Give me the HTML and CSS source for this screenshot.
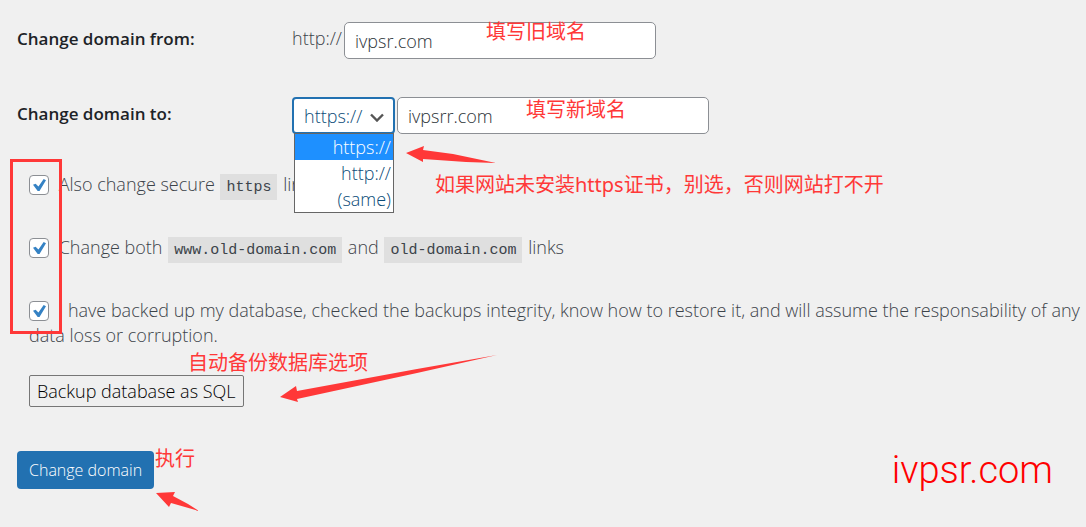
FILE: index.html
```
<!DOCTYPE html>
<html lang="en">
<head>
<meta charset="UTF-8">
<meta name="viewport" content="width=device-width, initial-scale=1.0">
<title>Change domain</title>
<link rel="stylesheet" href="styles.css">
</head>
<body>
<form class="domain-form">
  <div class="row">
    <label class="row-label" for="domain_from">Change domain from:</label>
    <div class="row-field">
      <span class="scheme">http://</span>
      <input type="text" class="domain-input" id="domain_from" value="ivpsr.com">
    </div>
    <span class="note note-old" lang="zh">填写旧域名</span>
  </div>

  <div class="row">
    <label class="row-label" for="domain_to">Change domain to:</label>
    <div class="row-field row-field-to">
      <div class="scheme-select">
        <select id="scheme" aria-label="Scheme">
          <option>https://</option>
          <option>http://</option>
          <option>(same)</option>
        </select>
        <svg class="chevron" viewBox="0 0 14 9" width="14" height="9"><path d="M1 1.5 L7 7.5 L13 1.5" fill="none" stroke="#555" stroke-width="2.4"/></svg>
        <ul class="scheme-menu">
          <li class="active">https://</li>
          <li>http://</li>
          <li>(same)</li>
        </ul>
      </div>
      <input type="text" class="domain-input" id="domain_to" value="ivpsrr.com">
    </div>
    <span class="note note-new" lang="zh">填写新域名</span>
    <svg class="arrow arrow-menu" viewBox="0 0 90 17" width="90" height="17"><path d="M0 7 L18 0 L17 4 L47 8 L90 17 L60 16 L17 13 L17 16 Z"/></svg>
    <span class="note note-https" lang="zh">如果网站未安装https证书，别选，否则网站打不开</span>
  </div>

  <div class="checks">
    <div class="mark-box"></div>
    <p class="check">
      <input type="checkbox" id="https_links" checked>
      <label for="https_links">Also change secure <code>https</code> links</label>
    </p>
    <p class="check">
      <input type="checkbox" id="both_links" checked>
      <label for="both_links">Change both <code>www.old-domain.com</code> and <code>old-domain.com</code> links</label>
    </p>
    <p class="check">
      <input type="checkbox" id="accept" checked>
      <label for="accept">I have backed up my database, checked the backups integrity, know how to restore it, and will assume the responsability of any data loss or corruption.</label>
    </p>
  </div>

  <div class="backup">
    <button type="button" class="backup-button">Backup database as SQL</button>
    <span class="note note-backup" lang="zh">自动备份数据库选项</span>
    <svg class="arrow arrow-backup" viewBox="0 0 217 47" width="217" height="47"><path d="M0 42 L16 31 L17 36 L137 14 L217 0 L137 18 L17 44 L18 47 Z"/></svg>
  </div>

  <div class="submit">
    <button type="submit" class="submit-button">Change domain</button>
    <span class="note note-run" lang="zh">执行</span>
    <svg class="arrow arrow-run" viewBox="0 0 43 19" width="43" height="19"><path d="M0 1 L19 0 L17 4 L32 12 L43 19 L15 11 L13 15 Z"/></svg>
  </div>
</form>
<div class="watermark">ivpsr.com</div>
</body>
</html>
```
FILE: styles.css
```
* {
  box-sizing: border-box;
}

body {
  margin: 0;
  background-color: #f0f0f0;
  color: #3c434a;
  font-family: "Open Sans", "Noto Sans CJK SC", sans-serif;
  font-size: 18px;
  font-weight: 300;
  line-height: 25px;
  position: relative;
}

input, select, button {
  font-family: inherit;
  font-size: inherit;
  font-weight: inherit;
}

.domain-form {
  padding: 22px 5px 22px 17px;
}

.row {
  display: grid;
  grid-template-columns: 275px 1fr;
  position: relative;
  margin-bottom: 38px;
}

.row-label {
  padding-top: 4px;
  color: #1d2327;
  font-size: 17px;
  font-weight: 600;
}

.row-field {
  display: flex;
}

.row-field-to {
  gap: 2px;
}

.scheme {
  width: 52px;
  padding-top: 4px;
}

.domain-input {
  width: 312px;
  height: 37px;
  padding: 0 10px;
  border: 1px solid #8c8f94;
  border-radius: 5px;
  background-color: #fff;
  color: #2c3338;
}

/* scheme drop-down, shown open */
.scheme-select {
  position: relative;
  width: 103px;
}

.scheme-select select {
  width: 100%;
  height: 37px;
  padding: 0 10px;
  border: 2px solid #2271b1;
  border-radius: 4px;
  background-color: #fff;
  color: #0a4b78;
  appearance: none;
}

.chevron {
  position: absolute;
  top: 16px;
  right: 11px;
}

.scheme-menu {
  position: absolute;
  z-index: 2;
  top: 36px;
  left: 2px;
  right: 1px;
  margin: 0;
  padding: 0;
  border: 1px solid #666;
  background-color: #fff;
  color: #0a4b78;
  list-style: none;
  line-height: 26px;
  text-align: right;
}

.scheme-menu li {
  padding-right: 2px;
}

.scheme-menu .active {
  background-color: #1e90ff;
  color: #fff;
}

/* check boxes */
.checks {
  position: relative;
  padding-left: 12px;
}

.check {
  margin: 0 0 38px;
}

.check input {
  appearance: none;
  position: relative;
  width: 20px;
  height: 20px;
  margin: 0 5px 0 0;
  border: 1px solid #8c8f94;
  border-radius: 4px;
  background-color: #fff;
  vertical-align: -4px;
}

.check input::before {
  content: "";
  position: absolute;
  top: 3px;
  left: 3px;
  width: 13px;
  height: 12px;
  background-color: #3582c4;
  clip-path: polygon(0 48%, 20% 40%, 42% 62%, 82% 0, 100% 10%, 50% 100%, 36% 100%);
}

.check code {
  margin: 0 1px;
  padding: 5px 6px 4px;
  background-color: #dfdfdf;
  font-family: "Liberation Mono", monospace;
  font-size: 15px;
  line-height: 1;
}

.backup {
  position: relative;
  margin: -11px 0 44px 12px;
}

.backup-button {
  display: block;
  height: 32px;
  padding: 0 7px;
  border: 1px solid #767676;
  border-radius: 2px;
  background-color: #efefef;
  color: #000;
}

.submit {
  position: relative;
}

.submit-button {
  display: block;
  height: 38px;
  padding: 0 12px;
  border: none;
  border-radius: 4px;
  background-color: #2271b1;
  color: #fff;
  font-size: 16px;
}

/* red notes */
.note {
  position: absolute;
  color: #ff3838;
  font-family: "Noto Sans", "Noto Sans CJK SC", sans-serif;
  font-size: 20px;
  font-weight: 400;
  white-space: nowrap;
}

.arrow {
  position: absolute;
  fill: #ff3838;
}

.mark-box {
  position: absolute;
  z-index: 1;
  top: -13px;
  left: -7px;
  width: 52px;
  height: 175px;
  border: 3px solid #ff3838;
}

.note-old {
  top: -3px;
  left: 469px;
}

.note-new {
  top: 0;
  left: 509px;
}

.note-https {
  top: 75px;
  left: 418px;
}

.note-backup {
  top: -25px;
  left: 159px;
}

.note-run {
  top: -5px;
  left: 138px;
}

.arrow-menu {
  top: 49px;
  left: 389px;
}

.arrow-backup {
  top: -20px;
  left: 251px;
}

.arrow-run {
  top: 41px;
  left: 139px;
}

.watermark {
  position: absolute;
  right: 33px;
  bottom: 16px;
  color: #f00;
  font-family: Roboto, sans-serif;
  font-size: 38px;
  font-weight: 300;
  line-height: 50px;
}
```
